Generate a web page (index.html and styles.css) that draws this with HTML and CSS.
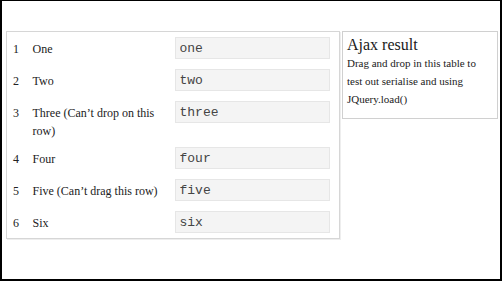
FILE: index.html
```html
<!DOCTYPE html>
<html lang="en">
<head>
    <meta charset="UTF-8">
    <title>Table drag and drop</title>
    <link rel="stylesheet" href="styles.css">
</head>
<body>
    <div class="frame">
        <!-- Sortable table -->
        <table class="rows">
            <tr>
                <td class="num">1</td>
                <td class="label">One</td>
                <td class="field"><input type="text" value="one"></td>
            </tr>
            <tr>
                <td class="num">2</td>
                <td class="label">Two</td>
                <td class="field"><input type="text" value="two"></td>
            </tr>
            <tr>
                <td class="num">3</td>
                <td class="label">Three (Can’t drop on this row)</td>
                <td class="field"><input type="text" value="three"></td>
            </tr>
            <tr>
                <td class="num">4</td>
                <td class="label">Four</td>
                <td class="field"><input type="text" value="four"></td>
            </tr>
            <tr>
                <td class="num">5</td>
                <td class="label">Five (Can’t drag this row)</td>
                <td class="field"><input type="text" value="five"></td>
            </tr>
            <tr>
                <td class="num">6</td>
                <td class="label">Six</td>
                <td class="field"><input type="text" value="six"></td>
            </tr>
        </table>

        <!-- Result panel -->
        <div class="result">
            <h2>Ajax result</h2>
            <p>Drag and drop in this table to test out serialise and using JQuery.load()</p>
        </div>
    </div>
</body>
</html>
```

FILE: styles.css
```css
*, *::before, *::after {
    box-sizing: border-box;
}

html, body {
    margin: 0;
    padding: 0;
}

body {
    font-family: 'Liberation Serif', serif;
    color: #222;
    background: #fff;
}

.frame {
    height: 100vh;
    border: 2px solid #000;
    border-top-width: 1px;
    padding: 30px 0 0 4px;
    display: flex;
    align-items: flex-start;
    gap: 2px;
}

.rows {
    width: 334px;
    border-collapse: collapse;
    border: 1px solid #d6d6d6;
    box-shadow: 1px 1px 0 #eee;
    table-layout: fixed;
    font-size: 12px;
}

.rows td {
    vertical-align: top;
    padding: 8px 6px 2px;
    line-height: 18px;
}

.num {
    width: 20px;
}

.label {
    width: 142px;
}

.rows td.field {
    padding: 5px 8px 5px 6px;
}

.field input {
    display: block;
    width: 155px;
    height: 22px;
    margin: 0;
    padding: 0 4px;
    border: 1px solid #e6e6e6;
    background: #f4f4f4;
    font-family: 'Liberation Mono', monospace;
    font-size: 13px;
    color: #444;
}

.result {
    width: 156px;
    height: 88px;
    border: 1px solid #d0d0d0;
    padding: 4px 4px;
}

.result h2 {
    margin: 0;
    font-size: 16px;
    font-weight: normal;
    line-height: 18px;
    color: #1a1a1a;
}

.result p {
    margin: 0;
    font-size: 11px;
    line-height: 18px;
}
```
